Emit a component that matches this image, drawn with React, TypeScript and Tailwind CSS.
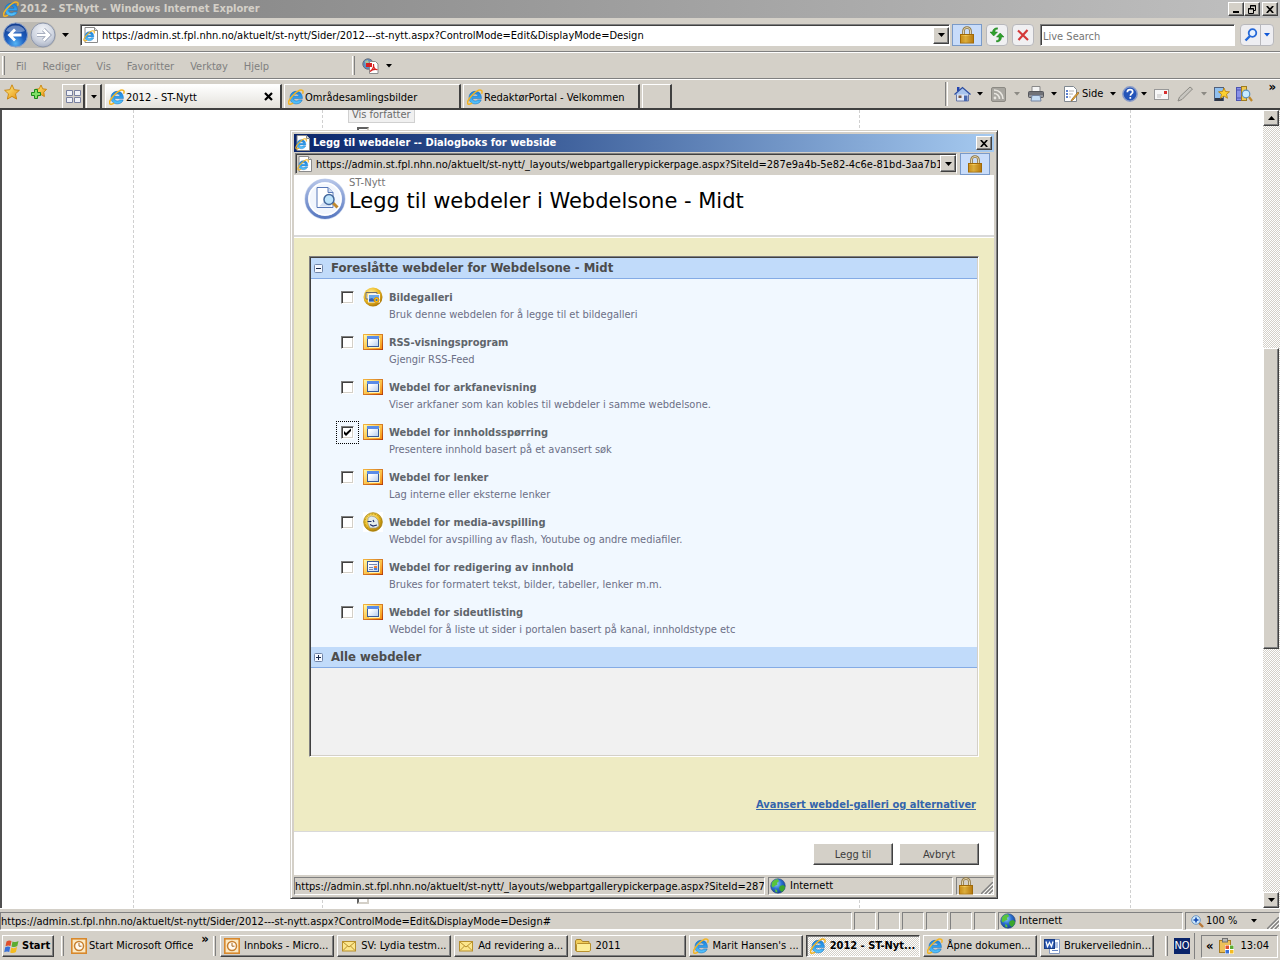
import React, { useState } from "react";

const raised =
  "border border-t-white border-l-white border-r-[#404040] border-b-[#404040] bg-[#d4d0c8] shadow-[inset_-1px_-1px_0_#808080]";
const sunken =
  "border border-t-[#808080] border-l-[#808080] border-r-white border-b-white";
const checker =
  "bg-[repeating-conic-gradient(#ffffff_0_25%,#d4d0c8_0_50%)] bg-[length:2px_2px]";
const uiFont = "font-['DejaVu_Sans_Condensed','DejaVu_Sans',sans-serif]";

function Defs() {
  return (
    <svg className="absolute size-0" aria-hidden="true">
      <defs>
        <linearGradient id="ieBlue" x1="0" y1="0" x2="0" y2="1">
          <stop offset="0" stopColor="#1a7fd8" />
          <stop offset="0.5" stopColor="#2ea0f0" />
          <stop offset="1" stopColor="#5cc8fc" />
        </linearGradient>
        <linearGradient id="orange" x1="0" y1="0" x2="1" y2="1">
          <stop offset="0" stopColor="#fffcb0" />
          <stop offset="0.5" stopColor="#fdc850" />
          <stop offset="1" stopColor="#f58a08" />
        </linearGradient>
        <linearGradient id="orangeEdge" x1="0" y1="0" x2="1" y2="1">
          <stop offset="0" stopColor="#f3b640" />
          <stop offset="1" stopColor="#b8400c" />
        </linearGradient>
        <linearGradient id="pane" x1="0" y1="0" x2="1" y2="1">
          <stop offset="0.3" stopColor="#ffffff" />
          <stop offset="1" stopColor="#b4cdf0" />
        </linearGradient>
        <radialGradient id="navBlue" cx="50%" cy="85%" r="85%">
          <stop offset="0" stopColor="#55b4f5" />
          <stop offset="0.45" stopColor="#1e5fc0" />
          <stop offset="1" stopColor="#123a8c" />
        </radialGradient>
        <radialGradient id="navGray" cx="50%" cy="30%" r="80%">
          <stop offset="0" stopColor="#f4f6fa" />
          <stop offset="0.6" stopColor="#ccd2de" />
          <stop offset="1" stopColor="#9aa3b8" />
        </radialGradient>
        <linearGradient id="gold" x1="0" y1="0" x2="1" y2="1">
          <stop offset="0" stopColor="#fff08a" />
          <stop offset="1" stopColor="#e8920c" />
        </linearGradient>
        <radialGradient id="earth" cx="40%" cy="35%" r="70%">
          <stop offset="0" stopColor="#8fd0f8" />
          <stop offset="0.5" stopColor="#2a6fd0" />
          <stop offset="1" stopColor="#123c8e" />
        </radialGradient>
        <radialGradient id="coin" cx="40%" cy="35%" r="65%">
          <stop offset="0" stopColor="#fff3b0" />
          <stop offset="0.6" stopColor="#eebf2c" />
          <stop offset="1" stopColor="#b07a08" />
        </radialGradient>
        <linearGradient id="lockBody" x1="0" y1="0" x2="1" y2="0">
          <stop offset="0" stopColor="#d8961c" />
          <stop offset="0.4" stopColor="#f3cc5c" />
          <stop offset="1" stopColor="#b87408" />
        </linearGradient>
        <linearGradient id="ring" x1="0" y1="0" x2="0" y2="1">
          <stop offset="0" stopColor="#b4c4e8" />
          <stop offset="1" stopColor="#5878c0" />
        </linearGradient>
      </defs>
    </svg>
  );
}

function IeMark() {
  return (
    <>
      <path
        d="M14.4 9.600H5.600c.2 1.500 1.300 2.300 2.800 2.300 1.100 0 1.900-.3 2.400-1h3.400c-.8 2.500-3 4-5.900 4-3.800 0-6.300-2.500-6.300-6.200 0-3.800 2.600-6.400 6.300-6.400s6.200 2.500 6.100 7.300zM5.600 7.200h5.300C10.700 5.800 9.800 5.100 8.300 5.100S5.900 5.900 5.600 7.200z"
        fill="url(#ieBlue)"
        stroke="#1468b8"
        strokeWidth="0.500"
      />
      <path
        d="M14.600 4.800c.7-1.700.6-3-.3-3.500-1.700-.9-5.700 1.300-9.200 5C1.500 10-.3 13.700.9 14.900c.8.800 2.400.3 4.200-.8"
        fill="none"
        stroke="#f2b424"
        strokeWidth="1.500"
      />
    </>
  );
}

function IeIcon() {
  return (
    <svg viewBox="0 0 16 16" className="size-4 shrink-0" aria-hidden="true">
      <IeMark />
    </svg>
  );
}

function IePageIcon() {
  return (
    <svg viewBox="0 0 16 16" className="size-4 shrink-0" aria-hidden="true">
      <path d="M2 .5h9.500l3 3v12H2z" fill="#fff" stroke="#8a8a8a" />
      <path d="M11.500.5v3h3" fill="#ddd" stroke="#8a8a8a" />
      <g transform="translate(.5 3) scale(.72)">
        <IeMark />
      </g>
    </svg>
  );
}

function Lock() {
  return (
    <svg viewBox="0 0 16 18" className="h-[18px] w-4 shrink-0" aria-hidden="true">
      <path d="M4.500 9V5a3.500 3.500 0 0 1 7 0v4" fill="none" stroke="#8d7440" strokeWidth="2.600" />
      <path d="M4.500 9V5a3.500 3.500 0 0 1 7 0v4" fill="none" stroke="#e4d8b4" strokeWidth="1" />
      <rect x="1.500" y="8.500" width="13" height="8.500" fill="url(#lockBody)" stroke="#a06a08" />
      <path d="M2 11h12M2 13h12M2 15h12" stroke="#b8820f" strokeWidth="0.800" />
    </svg>
  );
}

function Globe() {
  return (
    <svg viewBox="0 0 16 16" className="size-4 shrink-0" aria-hidden="true">
      <circle cx="8" cy="8" r="7.300" fill="url(#earth)" stroke="#2b4c80" strokeWidth="0.600" />
      <path d="M2 4.500C3.500 2 6 1 8 1.200l1 2-2 1.500.5 2-2.500 1L3 9.500 1.500 8z" fill="#59c43c" />
      <path d="M10 8l3-1 2 1.500c0 2.500-1.500 4.500-3 5.500l-2-1.500L9 10z" fill="#3aa62c" />
      <path d="M5 11l2 1 .5 2.500L5.500 14z" fill="#59c43c" />
    </svg>
  );
}

function Caret({ muted = false }: { muted?: boolean }) {
  return (
    <svg viewBox="0 0 6 4" className="h-1 w-1.5 shrink-0" aria-hidden="true">
      <path d="M0 0h6L3 3.500z" fill={muted ? "#8c8a84" : "#000"} />
    </svg>
  );
}

function CaretBig({ up = false }: { up?: boolean }) {
  return (
    <svg viewBox="0 0 7 4" className="h-1 w-[7px] shrink-0" aria-hidden="true">
      <path d={up ? "M0 4h7L3.500 0z" : "M0 0h7L3.500 4z"} fill="#000" />
    </svg>
  );
}

function CloseX() {
  return (
    <svg viewBox="0 0 8 7" className="h-[7px] w-2" aria-hidden="true">
      <path d="M.8 0l6.400 7M7.200 0L.8 7" stroke="#000" strokeWidth="1.700" />
    </svg>
  );
}

function Star({ plus = false }: { plus?: boolean }) {
  return (
    <svg viewBox="0 0 16 16" className="size-4 shrink-0" aria-hidden="true">
      <path
        d={
          plus
            ? "M10 1l1.700 3.800 3.900.5-2.800 2.900.6 4.300-3.400-2-3.600 2 .7-4.300-3-2.900 4.100-.5z"
            : "M8 .8l2.200 4.900 5.200.6-3.900 3.500 1.100 5.300L8 12.400l-4.600 2.700 1.100-5.300L.6 6.300l5.200-.6z"
        }
        fill="url(#gold)"
        stroke="#c98208"
        strokeWidth="0.900"
      />
      {plus && (
        <path d="M3.500 5.500h3v3h3v3h-3v3h-3v-3h-3v-3h3z" fill="#7fe066" stroke="#1c8a18" />
      )}
    </svg>
  );
}

function WindowIcon({ kind }: { kind: string }) {
  if (kind === "gallery") {
    return (
      <svg viewBox="0 0 20 20" className="size-5" aria-hidden="true">
        <circle cx="10" cy="10" r="9.500" fill="url(#coin)" />
        <path d="M3 5.500h11v2M3 5.500V12h2" fill="#eee" stroke="#6d6d6d" />
        <rect x="5.500" y="7.500" width="11" height="7.500" fill="#68a8ec" stroke="#f4f4f4" />
        <path d="M6 14.500v-2.500l3-1 3 2 2 1.500z" fill="#3560b0" />
        <circle cx="13.500" cy="13" r="2.500" fill="#f7c414" stroke="#d88c08" />
        <circle cx="13.500" cy="13" r="1" fill="#2f62c0" />
      </svg>
    );
  }
  if (kind === "media") {
    return (
      <svg viewBox="0 0 20 20" className="size-5 bg-white" aria-hidden="true">
        <circle cx="10" cy="10" r="9.300" fill="url(#coin)" stroke="#a4820c" strokeWidth="0.800" />
        <circle cx="10" cy="10" r="8" fill="none" stroke="#b8960c" strokeWidth="1" strokeDasharray="1.500 1.500" />
        <path d="M5 6l3-2 4 1 3 3 1 6-3 2H7l-2-4z" fill="#e4ecec" stroke="#8a8a70" strokeWidth="0.600" />
        <path d="M4.500 9.500h4M10 8l1 2M7 12.500l3 1.500 4-1" stroke="#20306c" strokeWidth="1.200" fill="none" />
      </svg>
    );
  }
  return (
    <svg viewBox="0 0 20 16" className="h-4 w-5" aria-hidden="true">
      <rect x=".5" y=".5" width="19" height="15" fill="url(#orange)" stroke="url(#orangeEdge)" />
      <path d="M16.500 4v9.500H6" stroke="#fff3b8" fill="none" />
      <rect x="4.500" y="2.500" width="11" height="10" fill="url(#pane)" stroke="#3a5a98" />
      {kind === "edit" ? (
        <>
          <path d="M6 5.500h8M6 8.500h4M6 10.500h4" stroke="#7888b0" />
          <rect x="11" y="7" width="3" height="2" fill="#f08030" />
          <rect x="11" y="9" width="3" height="2" fill="#5080d8" />
        </>
      ) : (
        <rect x="4" y="2" width="12" height="3" fill="#5a8ce8" />
      )}
    </svg>
  );
}

function Grip({ className = "h-[22px]" }: { className?: string }) {
  return (
    <span
      className={`block w-[3px] shrink-0 border-l border-r border-l-white border-r-[#808080] ${className}`}
    />
  );
}

function ResizeGrip() {
  return (
    <svg viewBox="0 0 12 12" className="size-3 shrink-0 self-end" aria-hidden="true">
      <path d="M0 12L12 0M4 12l8-8M8 12l4-4" stroke="#808080" strokeWidth="1.400" />
      <path d="M2 12L12 2M6 12l6-6M10 12l2-2" stroke="#fff" strokeWidth="0.800" />
    </svg>
  );
}

function TitleBar() {
  const btn = `flex h-[14px] w-4 items-center justify-center ${raised}`;
  return (
    <header className="flex h-[18px] shrink-0 items-center bg-linear-to-r from-[#808080] to-[#c0c0c0] pl-[3px] pr-0.5 text-[#d4d0c8]">
      <IeIcon />
      <h1 className="ml-px flex-1 pt-px text-[11px] font-bold">2012 - ST-Nytt - Windows Internet Explorer</h1>
      <button type="button" aria-label="Minimize" className={btn}>
        <span className="mt-[5px] h-0.5 w-1.5 bg-black" />
      </button>
      <button type="button" aria-label="Restore" className={btn}>
        <svg viewBox="0 0 8 9" className="h-[9px] w-2" aria-hidden="true">
          <path d="M2.500 3V.5h5v5H6M2 1h6M.5 3.500h5v5h-5zM0 4h6" stroke="#000" fill="none" />
        </svg>
      </button>
      <button type="button" aria-label="Close" className={`ml-0.5 ${btn}`}>
        <CloseX />
      </button>
    </header>
  );
}

function AddressRow() {
  return (
    <div className="flex h-[34px] shrink-0 items-center border-b border-b-[#808080] pt-px pl-0.5 pr-[6px]">
      <svg viewBox="0 0 54 28" className="h-7 w-[54px] shrink-0" aria-hidden="true">
        <path d="M13 1h28a13 13 0 0 1 0 26H13z" fill="#bdbab3" />
        <circle cx="13.500" cy="14" r="12" fill="url(#navBlue)" stroke="#8aa0c8" />
        <path d="M4 10a10 8 0 0 1 19 0q-9 3-19 0z" fill="#fff" opacity=".35" />
        <path d="M19.500 14H8M13 8.500L7.500 14l5.500 5.500" stroke="#fff" strokeWidth="2.800" fill="none" />
        <circle cx="41" cy="14" r="12" fill="url(#navGray)" stroke="#8f98ac" />
        <path d="M35 14h11.500M41.500 8.500L47 14l-5.500 5.500" stroke="#8d96ab" strokeWidth="4" fill="none" />
        <path d="M35 14h11.500M41.500 8.500L47 14l-5.500 5.500" stroke="#fff" strokeWidth="2.600" fill="none" />
      </svg>
      <button type="button" aria-label="Recent pages" className="ml-[6px] flex h-5 w-[7px] items-center">
        <CaretBig />
      </button>
      <label className="ml-[11px] flex h-[22px] min-w-0 flex-1 items-center border border-t-[#808080] border-l-[#808080] border-r-white border-b-white bg-white pl-0.5 shadow-[inset_1px_1px_0_#404040]">
        <IePageIcon />
        <input
          aria-label="Address"
          className="ml-[3px] min-w-0 flex-1 bg-transparent pt-[3px] text-[11px] outline-none"
          defaultValue="https://admin.st.fpl.nhn.no/aktuelt/st-nytt/Sider/2012---st-nytt.aspx?ControlMode=Edit&DisplayMode=Design"
        />
        <button type="button" aria-label="Show addresses" className={`flex h-[17px] w-4 items-center justify-center ${raised}`}>
          <CaretBig />
        </button>
      </label>
      <button type="button" aria-label="Security report" className="ml-0.5 flex h-[22px] w-[30px] items-center justify-center border border-[#7a9ac8] bg-[#c8dcfa]">
        <Lock />
      </button>
      <button type="button" aria-label="Refresh" className="ml-1 flex size-[22px] items-center justify-center rounded-sm border border-[#b8b8bc] bg-[#f0f0f2]">
        <svg viewBox="0 0 16 16" className="size-4" aria-hidden="true">
          <path
            d="M8.500 2.200C6 2.200 6 3.500 6 5H8.500L4.700 9 1 5h2.500C3.500 2.500 5.500.8 8.500.8zM7.500 13.500c2.500 0 2.500-1.500 2.500-3.500H7.500l3.700-4L15 10h-2.500c0 3-2 5-5 5z"
            fill="#2fa02c"
            stroke="#1c7c1c"
            strokeWidth="0.500"
          />
        </svg>
      </button>
      <button type="button" aria-label="Stop" className="ml-1 flex size-[22px] items-center justify-center rounded-sm border border-[#b8b8bc] bg-[#f0f0f2]">
        <svg viewBox="0 0 12 12" className="size-3" aria-hidden="true">
          <path d="M1 1.500L11 11M10.500 1L1.500 11" stroke="#d43838" strokeWidth="2.200" />
        </svg>
      </button>
      <input
        aria-label="Live Search"
        placeholder="Live Search"
        className="ml-[6px] h-[22px] w-[195px] border border-t-[#808080] border-l-[#808080] border-r-white border-b-white bg-white pt-[3px] pl-0.5 text-[11px] shadow-[inset_1px_1px_0_#404040] outline-none placeholder:text-[#757575]"
      />
      <div className="ml-[5px] flex h-[22px] w-[34px] rounded-sm border border-[#b8b8bc] bg-[#eeeef2]">
        <button type="button" aria-label="Search" className="flex w-5 items-center justify-center border-r border-r-[#b8b8bc]">
          <svg viewBox="0 0 14 14" className="size-[14px]" aria-hidden="true">
            <circle cx="8.500" cy="5" r="3.800" fill="#e8f2ff" stroke="#2468d8" strokeWidth="1.800" />
            <path d="M6 8L1.500 12.500" stroke="#2468d8" strokeWidth="2.400" />
          </svg>
        </button>
        <button type="button" aria-label="Search options" className="flex flex-1 items-center justify-center">
          <svg viewBox="0 0 6 4" className="h-1 w-1.5" aria-hidden="true">
            <path d="M0 0h6L3 3.500z" fill="#1058d8" />
          </svg>
        </button>
      </div>
    </div>
  );
}

function MenuRow() {
  return (
    <div className="flex h-[27px] shrink-0 items-center border-t border-b border-t-white border-b-[#808080] text-[11px] text-[#808080]">
      <Grip className="ml-0.5 h-[19px]" />
      <nav className="ml-[11px] flex w-[336px] gap-4 pt-[3px]">
        {["Fil", "Rediger", "Vis", "Favoritter", "Verktøy", "Hjelp"].map((item) => (
          <button type="button" key={item}>
            {item}
          </button>
        ))}
      </nav>
      <Grip className="h-[19px]" />
      <button type="button" aria-label="Convert to PDF" className="ml-[7px] flex items-center gap-[7px]">
        <svg viewBox="0 0 17 16" className="h-4 w-[17px]" aria-hidden="true">
          <circle cx="6" cy="6" r="5.200" fill="#5c8cc8" stroke="#6c7078" />
          <path d="M3 3l3-1 1 3-3 3z" fill="#a8c8a0" />
          <path d="M7.500 3.500h6l2.500 2.500v9.500H7.500z" fill="#fff" stroke="#8c8c8c" />
          <path d="M4 5h6v4H4z" fill="#d82020" />
          <path d="M8 13.500c3-2 4-5 3.500-7.500M11.500 7c0 3 2 5 4 4.500M8 13.500c2-2 4-2.500 7-2" stroke="#d82020" strokeWidth="1.200" fill="none" />
        </svg>
        <Caret />
      </button>
    </div>
  );
}

function Tab({ label, active = false }: { label: string; active?: boolean }) {
  return (
    <div
      className={`flex h-6 w-[177px] items-center border-t border-l border-r-2 border-t-white border-l-white border-r-[#404040] pl-[3px] pr-[7px] ${
        active ? "bg-linear-to-b from-white to-[#e4e2dc]" : "bg-[#d4d0c8]"
      }`}
    >
      <IeIcon />
      <button type="button" role="tab" aria-selected={active} className="ml-px flex-1 truncate pt-[3px] text-left text-[11px]">
        {label}
      </button>
      {active && (
        <button type="button" aria-label="Close tab">
          <svg viewBox="0 0 9 9" className="size-[9px]" aria-hidden="true">
            <path d="M1 1l7 7M8 1L1 8" stroke="#000" strokeWidth="2.200" />
          </svg>
        </button>
      )}
    </div>
  );
}

function CommandBar() {
  return (
    <div className="flex h-full items-center text-[11px]">
      <span className="h-6 w-[3px] border-l border-r border-l-[#808080] border-r-white" />
      <button type="button" aria-label="Home" className="ml-[6px] flex items-center gap-[6px]">
        <svg viewBox="0 0 17 16" className="h-4 w-[17px]" aria-hidden="true">
          <path d="M2.500 7.500h12V15h-12z" fill="#dfe8f8" stroke="#6878a8" />
          <path d="M3 1h2.500v4H3z" fill="#2444b0" />
          <path d="M.5 8.500L8.500 1.500l8 7" fill="#a8c4ee" stroke="#2e4ea0" strokeWidth="1.300" />
          <path d="M10 9.500h3.500V15H10z" fill="#4868b0" />
          <path d="M4.500 9.500h3v2.500h-3z" fill="#785848" />
        </svg>
        <Caret />
      </button>
      <button type="button" aria-label="Feeds" className="ml-2 flex items-center gap-2">
        <svg viewBox="0 0 15 15" className="size-[15px]" aria-hidden="true">
          <rect x=".5" y=".5" width="14" height="14" rx="1.500" fill="#a8a6a0" stroke="#8c8a84" />
          <circle cx="4" cy="11" r="1.400" fill="#e8e6e0" />
          <path d="M3 6.500a5.500 5.500 0 0 1 5.500 5.500M3 3a9 9 0 0 1 9 9" stroke="#e8e6e0" strokeWidth="1.600" fill="none" />
        </svg>
        <Caret muted />
      </button>
      <button type="button" aria-label="Print" className="ml-2 flex items-center gap-[7px]">
        <svg viewBox="0 0 16 16" className="size-4" aria-hidden="true">
          <path d="M4 .5h8v6H4z" fill="#f4f4f4" stroke="#888" />
          <rect x=".5" y="5.500" width="15" height="6" rx="1" fill="#707278" stroke="#55575c" />
          <path d="M1 10h14" stroke="#b8bac0" />
          <path d="M4 9.500h8l1 5.500H3z" fill="#c4dcf4" stroke="#7484a0" />
        </svg>
        <Caret />
      </button>
      <button type="button" className="ml-1.5 flex items-center">
        <svg viewBox="0 0 16 16" className="mr-[3px] size-4" aria-hidden="true">
          <path d="M1.500.5h9l3 3v12h-12z" fill="#fff" stroke="#808890" />
          <path d="M3 5h2M3 8h2M3 11h2" stroke="#2858c0" strokeWidth="1.500" />
          <path d="M6 5h5M6 8h4M6 11h2" stroke="#b0b0b0" />
          <path d="M15 6l-6 7-1 2 2-1 6-7z" fill="#f0b030" stroke="#906020" strokeWidth="0.700" />
        </svg>
        <span className="mr-[7px] pt-px">Side</span>
        <Caret />
      </button>
      <button type="button" aria-label="Help" className="ml-[6px] flex items-center gap-[3px]">
        <svg viewBox="0 0 16 16" className="size-4" aria-hidden="true">
          <circle cx="8" cy="8" r="7.200" fill="#2454b8" stroke="#8a9cc8" strokeWidth="1.500" />
          <path d="M5.300 6.200C5.300 4.500 6.500 3.600 8 3.600s2.700.9 2.700 2.300c0 1.700-2.300 1.900-2.300 3.800M8.300 11v1.800" stroke="#fff" strokeWidth="1.700" fill="none" />
        </svg>
        <Caret />
      </button>
      <button type="button" aria-label="Mail" className="ml-[7px]">
        <svg viewBox="0 0 15 11" className="h-[11px] w-[15px]" aria-hidden="true">
          <rect x=".5" y=".5" width="14" height="10" fill="#f8f8f8" stroke="#989898" />
          <rect x="10" y="2" width="3" height="3" fill="#d83030" />
          <path d="M3 6h5M3 8h4" stroke="#c0c0c0" />
        </svg>
      </button>
      <button type="button" aria-label="Edit" className="ml-2 flex items-center gap-[7px]">
        <svg viewBox="0 0 17 16" className="h-4 w-[17px]" aria-hidden="true">
          <path d="M1 15l1.500-4L13 1l2.500 2L5 13.500z" fill="#c8c6c0" stroke="#8c8a84" />
        </svg>
        <Caret muted />
      </button>
      <button type="button" aria-label="Blog" className="ml-[7px]">
        <svg viewBox="0 0 16 16" className="size-4" aria-hidden="true">
          <rect x=".5" y="1.500" width="9" height="13" fill="#90c0f0" stroke="#50607c" />
          <path d="M1 12h8v3H1z" fill="#303848" />
          <path d="M10 2l1.500 3.500 4 .3-3 2.500 1 4L10 10l-3.500 2.300 1-4-3-2.500 4-.3z" fill="#fbd030" stroke="#b87c08" strokeWidth="0.800" />
        </svg>
      </button>
      <button type="button" aria-label="Research" className="ml-[6px]">
        <svg viewBox="0 0 17 16" className="h-4 w-[17px]" aria-hidden="true">
          <rect x=".5" y="1.500" width="5" height="13" fill="#8890e8" stroke="#4c54b0" />
          <rect x="5.500" y=".5" width="5" height="14" fill="#f0c850" stroke="#a07c20" />
          <path d="M1 4h4M1 12h4" stroke="#4c54b0" />
          <circle cx="10" cy="8" r="3.800" fill="#c8ecff" stroke="#5890c0" strokeWidth="1.200" />
          <path d="M13 11l3 4" stroke="#c08828" strokeWidth="2.200" />
        </svg>
      </button>
      <button type="button" aria-label="More commands" className="ml-[15px] mr-1 self-start text-[13px] leading-[14px] font-bold">
        »
      </button>
    </div>
  );
}

function TabRow() {
  return (
    <div className="flex h-[31px] shrink-0 items-end border-t border-b-2 border-t-white border-b-[#404040]">
      <div className="flex h-full items-center gap-[11px] pb-1 pl-1 pr-[15px]">
        <button type="button" aria-label="Favorites">
          <Star />
        </button>
        <button type="button" aria-label="Add to favorites">
          <Star plus />
        </button>
      </div>
      <button type="button" aria-label="Quick tabs" className="flex h-6 w-[23px] items-center justify-center border-t border-l border-r-2 border-t-white border-l-white border-r-[#404040]">
        <svg viewBox="0 0 15 13" className="h-[13px] w-[15px]" aria-hidden="true">
          <path d="M.5.500h6v5h-6zM8.500.500h6v5h-6zM.5 7.500h6v5h-6zM8.500 7.500h6v5h-6z" fill="#f0f2f8" stroke="#7880a0" />
        </svg>
      </button>
      <button type="button" aria-label="Tab list" className="ml-px flex h-6 w-4 items-center justify-center border-t border-l border-r-2 border-t-white border-l-white border-r-[#404040]">
        <Caret />
      </button>
      <div role="tablist" className="ml-[3px] flex flex-1 gap-[2px]">
        <Tab label="2012 - ST-Nytt" active />
        <Tab label="Områdesamlingsbilder" />
        <Tab label="RedaktørPortal - Velkommen" />
        <button type="button" aria-label="New tab" className="h-6 w-[30px] border-t border-l border-r-2 border-t-white border-l-white border-r-[#404040]" />
      </div>
      <CommandBar />
    </div>
  );
}

function ScrollBar() {
  const end = `flex size-4 shrink-0 items-center justify-center ${raised}`;
  return (
    <div className={`flex w-[17px] shrink-0 flex-col ${checker}`}>
      <button type="button" aria-label="Scroll up" className={end}>
        <CaretBig up />
      </button>
      <div className="flex-[223]" />
      <div className={`w-4 flex-[299] ${raised}`} />
      <div className="flex-[244]" />
      <button type="button" aria-label="Scroll down" className={end}>
        <CaretBig />
      </button>
    </div>
  );
}

function CheckBox({ id, checked, onChange }: { id: string; checked: boolean; onChange: () => void }) {
  return (
    <span className={`grid size-[13px] shrink-0 ${checked ? "outline-1 outline-offset-4 outline-dotted outline-black" : ""}`}>
      <input
        id={id}
        type="checkbox"
        checked={checked}
        onChange={onChange}
        className="col-start-1 row-start-1 size-[13px] appearance-none border border-t-[#808080] border-l-[#808080] border-r-white border-b-white bg-white shadow-[inset_1px_1px_0_#404040,inset_-1px_-1px_0_#d4d0c8]"
      />
      {checked && (
        <svg viewBox="0 0 13 13" className="pointer-events-none col-start-1 row-start-1 size-[13px]" aria-hidden="true">
          <path d="M3 5v3l2 2 5-5V2.500L5 7z" fill="#000" />
        </svg>
      )}
    </span>
  );
}

const parts = [
  { kind: "gallery", title: "Bildegalleri", text: "Bruk denne webdelen for å legge til et bildegalleri" },
  { kind: "window", title: "RSS-visningsprogram", text: "Gjengir RSS-Feed" },
  { kind: "window", title: "Webdel for arkfanevisning", text: "Viser arkfaner som kan kobles til webdeler i samme webdelsone." },
  { kind: "window", title: "Webdel for innholdsspørring", text: "Presentere innhold basert på et avansert søk" },
  { kind: "window", title: "Webdel for lenker", text: "Lag interne eller eksterne lenker" },
  { kind: "media", title: "Webdel for media-avspilling", text: "Webdel for avspilling av flash, Youtube og andre mediafiler." },
  { kind: "edit", title: "Webdel for redigering av innhold", text: "Brukes for formatert tekst, bilder, tabeller, lenker m.m." },
  { kind: "window", title: "Webdel for sideutlisting", text: "Webdel for å liste ut sider i portalen basert på kanal, innholdstype etc" },
];

function GroupHeader({ open, children }: { open: boolean; children: React.ReactNode }) {
  return (
    <h3 className="h-[21px] border-b border-b-[#84abe5] bg-[#c1dbfa] text-[13px] font-bold text-[#4c4c4c]">
      <button type="button" aria-expanded={open} className="flex h-5 w-full items-center pl-[3px] text-left">
        <svg viewBox="0 0 9 9" className="mr-2 size-[9px]" aria-hidden="true">
          <rect x=".5" y=".5" width="8" height="8" rx="1" fill="#f4f8ff" stroke="#7084a8" />
          <path d={open ? "M2 4.500h5" : "M2 4.500h5M4.500 2v5"} stroke="#182848" />
        </svg>
        {children}
      </button>
    </h3>
  );
}

function PartList() {
  const [picked, setPicked] = useState<number[]>([3]);
  const toggle = (i: number) =>
    setPicked((p) => (p.includes(i) ? p.filter((x) => x !== i) : [...p, i]));
  return (
    <section className="flex flex-1 flex-col border border-t-[#808080] border-l-[#808080] border-r-white border-b-white pt-px pl-px shadow-[inset_1px_1px_0_#404040]">
      <div className="flex flex-1 flex-col border-r border-b border-[#d4d0c8] bg-[#f1f1f1]">
        <GroupHeader open>Foreslåtte webdeler for Webdelsone - Midt</GroupHeader>
        <ul className="bg-[#f1f8ff] pt-2">
          {parts.map((p, i) => (
            <li key={p.title} className="flex h-[45px] pl-[30px]">
              <span className="pt-1">
                <CheckBox id={`part-${i}`} checked={picked.includes(i)} onChange={() => toggle(i)} />
              </span>
              <span className="ml-[9px] flex h-5 w-5 items-center">
                <WindowIcon kind={p.kind} />
              </span>
              <label htmlFor={`part-${i}`} className="ml-[6px] pt-0.5 text-[11px] leading-[17px] text-[#6c6f86]">
                <strong className="block text-[#5f656b]">{p.title}</strong>
                <span className="block">{p.text}</span>
              </label>
            </li>
          ))}
        </ul>
        <GroupHeader open={false}>Alle webdeler</GroupHeader>
      </div>
    </section>
  );
}

const dialogUrl =
  "https://admin.st.fpl.nhn.no/aktuelt/st-nytt/_layouts/webpartgallerypickerpage.aspx?SiteId=287e";

function Dialog() {
  const push = `h-[22px] w-20 pt-[3px] text-[11px] text-[#3c3c3c] ${raised}`;
  return (
    <div
      role="dialog"
      aria-label="Legg til webdeler"
      className="absolute top-5 bottom-[9px] left-[288px] flex w-[708px] flex-col border border-t-[#d4d0c8] border-l-[#d4d0c8] border-r-[#404040] border-b-[#404040] bg-[#d4d0c8] p-[3px] shadow-[inset_1px_1px_0_#ffffff,inset_-1px_-1px_0_#808080]"
    >
      <header className="flex h-[18px] shrink-0 items-center bg-linear-to-r from-[#0a246a] to-[#a6caf0] pl-px pr-0.5 text-white">
        <IePageIcon />
        <h2 className="ml-0.5 flex-1 pt-px text-[11px] font-bold">Legg til webdeler -- Dialogboks for webside</h2>
        <button type="button" aria-label="Close" className={`flex h-[14px] w-4 items-center justify-center ${raised}`}>
          <CloseX />
        </button>
      </header>
      <div className="flex h-[23px] shrink-0 items-center pr-1">
        <label className="mr-[3px] ml-px flex h-[21px] min-w-0 flex-1 items-center border border-t-[#808080] border-l-[#808080] border-r-white border-b-[#d4d0c8] pl-px shadow-[inset_1px_1px_0_#404040]">
          <IePageIcon />
          <input
            aria-label="Dialog address"
            readOnly
            value={`${dialogUrl}9a4b-5e82-4c6e-81bd-3aa7b1c6`}
            className="ml-[3px] min-w-0 flex-1 bg-transparent pt-[3px] text-[11px] outline-none"
          />
          <button type="button" aria-label="Show addresses" className={`flex h-[17px] w-4 items-center justify-center ${raised}`}>
            <CaretBig />
          </button>
        </label>
        <button type="button" aria-label="Security report" className="flex h-[22px] w-[30px] items-center justify-center border border-[#7a9ac8] bg-[#c8dcfa]">
          <Lock />
        </button>
      </div>
      <div className="flex h-[62px] shrink-0 border-b-2 border-b-[#d9d9d9] bg-white pl-[10px]">
        <svg viewBox="0 0 42 42" className="mt-[3px] mr-[3px] size-[42px]" aria-hidden="true">
          <circle cx="21" cy="21" r="18.500" fill="#f2f6fd" stroke="#c9d6ee" strokeWidth="4" />
          <circle cx="21" cy="21" r="18.500" fill="none" stroke="url(#ring)" strokeWidth="2.800" />
          <circle cx="21" cy="21" r="16" fill="none" stroke="#fff" strokeWidth="1.500" />
          <path d="M13 9.500h11l5 5v15H13z" fill="#fff" stroke="#5878b8" />
          <path d="M24 9.500v5h5" fill="#d0dcf0" stroke="#5878b8" />
          <path d="M15 28.500l12-12v12z" fill="#d4e0f4" />
          <path d="M29 25l4.500 4.500" stroke="#c0882c" strokeWidth="3" />
          <circle cx="25" cy="21.500" r="5" fill="#bfe4fb" stroke="#44689c" strokeWidth="1.500" />
        </svg>
        <div className="font-['DejaVu_Sans',sans-serif]">
          <p className="h-[14px] text-[10px] leading-[16px] text-[#757575]">ST-Nytt</p>
          <h2 className="text-[21px] leading-6 text-black">Legg til webdeler i Webdelsone - Midt</h2>
        </div>
      </div>
      <div className="flex flex-1 flex-col border-t border-b border-t-white border-b-[#d9d9d9] bg-[#eeebc3] px-[15px] pt-[18px]">
        <PartList />
        <div className="flex h-[74px] items-center justify-end pt-[22px] pr-[3px]">
          <a href="#galleri" className="text-[11px] font-bold text-[#3464ac] underline">
            Avansert webdel-galleri og alternativer
          </a>
        </div>
      </div>
      <div className="flex h-[43px] shrink-0 items-center justify-end gap-[6px] bg-white pt-px pr-[15px]">
        <button type="button" className={push}>Legg til</button>
        <button type="button" className={push}>Avbryt</button>
      </div>
      <footer className="flex h-5 shrink-0 gap-[3px] pt-0.5 text-[11px]">
        <span className={`min-w-0 flex-1 overflow-hidden whitespace-nowrap leading-[17px] ${sunken}`}>{dialogUrl}</span>
        <span className={`flex w-[185px] items-center gap-1 pl-px ${sunken}`}>
          <Globe />
          <span className="pt-px">Internett</span>
        </span>
        <span className={`flex w-[38px] items-center justify-between pl-px ${sunken}`}>
          <Lock />
          <ResizeGrip />
        </span>
      </footer>
    </div>
  );
}

function PageBehind() {
  return (
    <div className="flex h-full text-[11px]">
      <div className="w-[132px] border-r border-dashed border-r-[#d0d0d0]" />
      <div className="w-[189px] border-r border-dashed border-r-[#d0d0d0]" />
      <div className="flex w-[537px] flex-col items-start border-r border-dashed border-r-[#d0d0d0] pl-[25px]">
        <button type="button" className="-mt-2 h-[21px] shrink-0 border border-[#d0d0d0] bg-[#f0f0f0] px-[3px] pt-1 text-[#6c6c6c]">
          Vis forfatter
        </button>
        <input type="checkbox" aria-label="Velg øverste" className="mt-1 ml-[9px] size-3 shrink-0 appearance-none border-2 border-t-[#606060] border-l-[#606060] border-r-[#d4d0c8] border-b-[#d4d0c8]" />
        <input type="checkbox" aria-label="Velg nederste" className="mt-auto mb-1 ml-[9px] size-3 shrink-0 appearance-none border-2 border-t-[#606060] border-l-[#606060] border-r-[#d4d0c8] border-b-[#d4d0c8]" />
      </div>
      <div className="w-[271px] border-r border-dashed border-r-[#d0d0d0]" />
    </div>
  );
}

function StatusBar() {
  return (
    <div className="flex h-[22px] shrink-0 gap-0.5 border-t border-t-white pt-[3px] text-[11px]">
      <span className={`flex-1 truncate leading-[17px] ${sunken}`}>
        https://admin.st.fpl.nhn.no/aktuelt/st-nytt/Sider/2012---st-nytt.aspx?ControlMode=Edit&amp;DisplayMode=Design#
      </span>
      {[0, 1, 2, 3, 4, 5].map((n) => (
        <span key={n} className={`w-[22px] ${sunken}`} />
      ))}
      <span className={`flex w-[185px] items-center gap-[3px] pl-px ${sunken}`}>
        <Globe />
        <span className="pt-px">Internett</span>
      </span>
      <button type="button" className={`flex w-[95px] items-center pl-[5px] ${sunken}`}>
        <svg viewBox="0 0 13 13" className="mr-[2px] size-[13px]" aria-hidden="true">
          <path d="M8 8l4 4" stroke="#b87838" strokeWidth="2.400" />
          <circle cx="5" cy="5" r="4.300" fill="#d0eafc" stroke="#6c94c0" />
          <path d="M2.500 5h5M5 2.500v5" stroke="#1048b0" strokeWidth="1.600" />
        </svg>
        <span className="flex-1 pt-px text-left">100 %</span>
        <Caret />
        <span className="ml-[10px] flex self-stretch">
          <ResizeGrip />
        </span>
      </button>
    </div>
  );
}

function OutlookIcon() {
  return (
    <svg viewBox="0 0 16 16" className="size-4 shrink-0" aria-hidden="true">
      <rect x=".8" y=".8" width="14.400" height="14.400" fill="#fbe9c4" stroke="#d8882c" strokeWidth="1.600" />
      <circle cx="8" cy="8" r="4.500" fill="#fffaf0" stroke="#c88030" strokeWidth="1.500" />
      <path d="M8 5v3.200h2.500" stroke="#a86820" fill="none" />
    </svg>
  );
}

function MailIcon() {
  return (
    <svg viewBox="0 0 16 16" className="size-4 shrink-0" aria-hidden="true">
      <rect x="1.500" y="3.500" width="13" height="9.500" fill="#fce68c" stroke="#b8902c" />
      <path d="M2 4l6 5 6-5M2 12.500l4.500-4.500M14 12.500L9.500 8" stroke="#b8902c" fill="none" />
    </svg>
  );
}

function FolderIcon() {
  return (
    <svg viewBox="0 0 16 16" className="size-4 shrink-0" aria-hidden="true">
      <path d="M.5 12.500V3l1-1.500h4.500L7.500 3.500H14v9z" fill="#f0cc58" stroke="#a8842c" />
      <path d="M1.500 13.500V6.500l1-1H15.500v7l-1.500 1z" fill="#fdee98" stroke="#b8902c" />
    </svg>
  );
}

function WordIcon() {
  return (
    <svg viewBox="0 0 16 16" className="size-4 shrink-0" aria-hidden="true">
      <path d="M5.500 1.500h10v14h-10z" fill="#fff" stroke="#8498c0" />
      <path d="M11 5h3M11 7h3M11 9h3M8 12.500h6" stroke="#6888c8" />
      <rect x=".5" y="1.500" width="10" height="9" fill="#2c58b0" stroke="#183c84" />
      <path d="M2 3.500l1.500 5 2-4 2 4L9 3.500" stroke="#fff" strokeWidth="1.300" fill="none" />
    </svg>
  );
}

function TaskBar() {
  const tasks = [
    { icon: <OutlookIcon />, label: "Innboks - Micro..." },
    { icon: <MailIcon />, label: "SV: Lydia testm..." },
    { icon: <MailIcon />, label: "Ad revidering a..." },
    { icon: <FolderIcon />, label: "2011" },
    { icon: <IeIcon />, label: "Marit Hansen's ..." },
    { icon: <IeIcon />, label: "2012 - ST-Nyt...", active: true },
    { icon: <IeIcon />, label: "Åpne dokumen..." },
    { icon: <WordIcon />, label: "Brukerveilednin..." },
  ];
  return (
    <footer className="flex h-[30px] shrink-0 items-center border-t border-t-white pt-px pr-0.5 pl-0.5 text-[11px]">
      <button type="button" className={`flex h-[22px] w-[52px] items-center gap-0.5 pl-px font-bold ${raised}`}>
        <svg viewBox="0 0 16 16" className="size-4" aria-hidden="true">
          <path d="M2.500 3.500C4.500 2 6 2.200 7.500 3L6.500 8C5 7.200 3.500 7.200 1.500 8.300z" fill="#e0502c" />
          <path d="M8.500 3.400c2 1 3.800.9 6-.3L13.300 8c-2 1.200-3.800 1.300-5.800.4z" fill="#5cac30" />
          <path d="M1.200 9.300C3.200 8.200 4.700 8.300 6.200 9L5.200 14c-1.500-.8-3-.8-5 .3z" fill="#3870d8" />
          <path d="M7.300 9.500c2 1 3.800.8 5.800-.4l-1.200 5c-2 1.200-3.700 1.200-5.700.3z" fill="#f4bc20" />
        </svg>
        Start
      </button>
      <Grip className="ml-[7px] h-5" />
      <a href="#office" className="ml-[7px] flex w-[122px] items-center gap-[2px] overflow-hidden whitespace-nowrap">
        <OutlookIcon />
        Start Microsoft Office
      </a>
      <button type="button" aria-label="More shortcuts" className="ml-1.5 w-3 self-start text-[13px] leading-[14px] font-bold">»</button>
      <Grip className="ml-[2px] h-5" />
      <div className="ml-1 flex min-w-0 flex-1 gap-[3px]">
        {tasks.map((t) => (
          <button
            type="button"
            key={t.label}
            className={`flex h-[22px] min-w-0 flex-1 items-center gap-1 pl-[3px] text-left ${
              t.active
                ? `border border-t-[#404040] border-l-[#404040] border-r-white border-b-white font-bold shadow-[inset_1px_1px_0_#808080] ${checker}`
                : raised
            }`}
          >
            {t.icon}
            <span className="overflow-hidden whitespace-nowrap">{t.label}</span>
          </button>
        ))}
      </div>
      <Grip className="ml-[11px] h-5" />
      <span className="ml-[6px] flex h-4 w-4 items-center justify-center bg-[#0a246a] text-white">NO</span>
      <span className="ml-1 block h-[26px] w-px bg-[#808080]" />
      <div className={`ml-[6px] flex h-[23px] w-[77px] items-center pr-2 pl-1 ${sunken}`}>
        <button type="button" aria-label="Show hidden icons" className="text-[13px] leading-4 font-bold">«</button>
        <svg viewBox="0 0 16 16" className="ml-1 size-4" aria-hidden="true">
          <rect x="1.500" y="2.500" width="11" height="12" fill="#ecc058" stroke="#a87c20" />
          <rect x="4.500" y=".5" width="5" height="3.500" fill="#b8b8b8" stroke="#707070" />
          <path d="M7 7h9v9H7z" fill="#fff" />
          <path d="M7.500 7.500h3.500v3.500H7.500z" fill="#e0502c" />
          <path d="M12 7.500h3.500v3.500H12z" fill="#5cac30" />
          <path d="M7.500 12h3.500v3.500H7.500z" fill="#3870d8" />
          <path d="M12 12h3.500v3.500H12z" fill="#f4bc20" />
        </svg>
        <time className="ml-auto">13:04</time>
      </div>
    </footer>
  );
}

export default function App() {
  return (
    <div className={`flex h-screen flex-col overflow-hidden bg-[#d4d0c8] text-black ${uiFont}`}>
      <Defs />
      <TitleBar />
      <AddressRow />
      <MenuRow />
      <TabRow />
      <main className="flex min-h-0 flex-1 border-l-2 border-l-[#505050]">
        <div className="relative min-w-0 flex-1 overflow-hidden bg-white">
          <PageBehind />
          <Dialog />
        </div>
        <ScrollBar />
      </main>
      <StatusBar />
      <TaskBar />
    </div>
  );
}
